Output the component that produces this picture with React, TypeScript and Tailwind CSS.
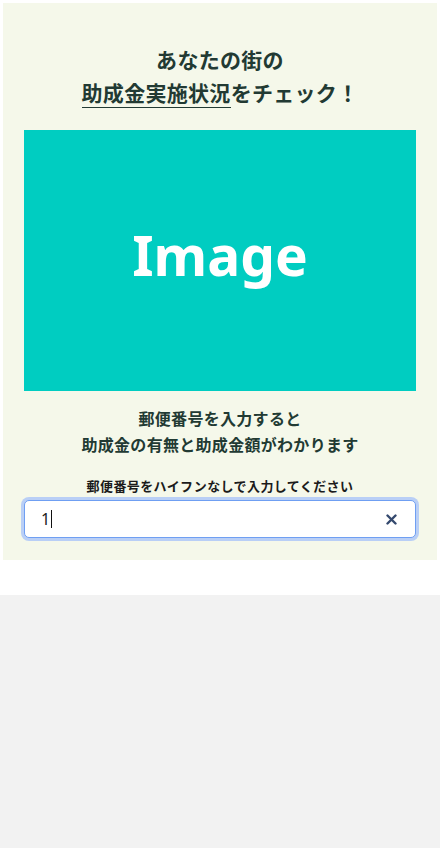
import React from "react";

export default function App() {
  const jp = { fontFamily: '"Noto Sans CJK JP", "Noto Sans", sans-serif' };
  return (
    <div className="w-[440px] min-h-[848px] bg-white flex flex-col" style={jp}>
      <div className="mx-[3px] mt-[3px] h-[557px] bg-[#f5f8ea] px-[21px] pt-[40px] flex flex-col items-center">
        <h1 className="text-[21px] leading-[33px] font-bold text-[#223a33] text-center tracking-[0.3px]">
          あなたの街の
          <br />
          <span className="border-b-[1.5px] border-[#223a33] pb-[0px]">助成金実施状況</span>をチェック！
        </h1>
        <div className="mt-[21px] w-[392px] h-[261px] bg-[#00cdc1] flex items-center justify-center pb-[12px]">
          <span
            className="text-white text-[55px] font-bold leading-none"
            style={{ fontFamily: '"Noto Sans", "Open Sans", sans-serif' }}
          >
            Image
          </span>
        </div>
        <p className="mt-[14px] text-[16px] leading-[26px] font-bold text-[#223a33] text-center tracking-[0.3px]">
          郵便番号を入力すると
          <br />
          助成金の有無と助成金額がわかります
        </p>
        <p className="mt-[19px] text-[13px] leading-[20px] font-bold text-[#1b1b1b] text-center tracking-[0.4px]">
          郵便番号をハイフンなしで入力してください
        </p>
        <div className="mt-[4px] w-[392px] h-[38px] rounded-[5px] bg-white border border-[#6f9ff2] ring-[3px] ring-[#b9cff6] flex items-center pl-[16px] pr-[16px]">
          <span className="text-[16px] text-[#222] leading-none" style={{ fontFamily: '"Noto Sans", sans-serif' }}>
            1
          </span>
          <span className="ml-[1px] w-[1px] h-[18px] bg-[#111]" />
          <span className="ml-auto flex items-center justify-center w-[16px] h-[16px]">
            <svg width="11" height="11" viewBox="0 0 11 11">
              <path d="M1.5 1.5 L9.5 9.5 M9.5 1.5 L1.5 9.5" stroke="#34496e" strokeWidth="2.4" strokeLinecap="round" />
            </svg>
          </span>
        </div>
      </div>
      <div className="h-[35px] bg-white" />
      <div className="flex-1 bg-[#f2f2f2]" />
    </div>
  );
}
